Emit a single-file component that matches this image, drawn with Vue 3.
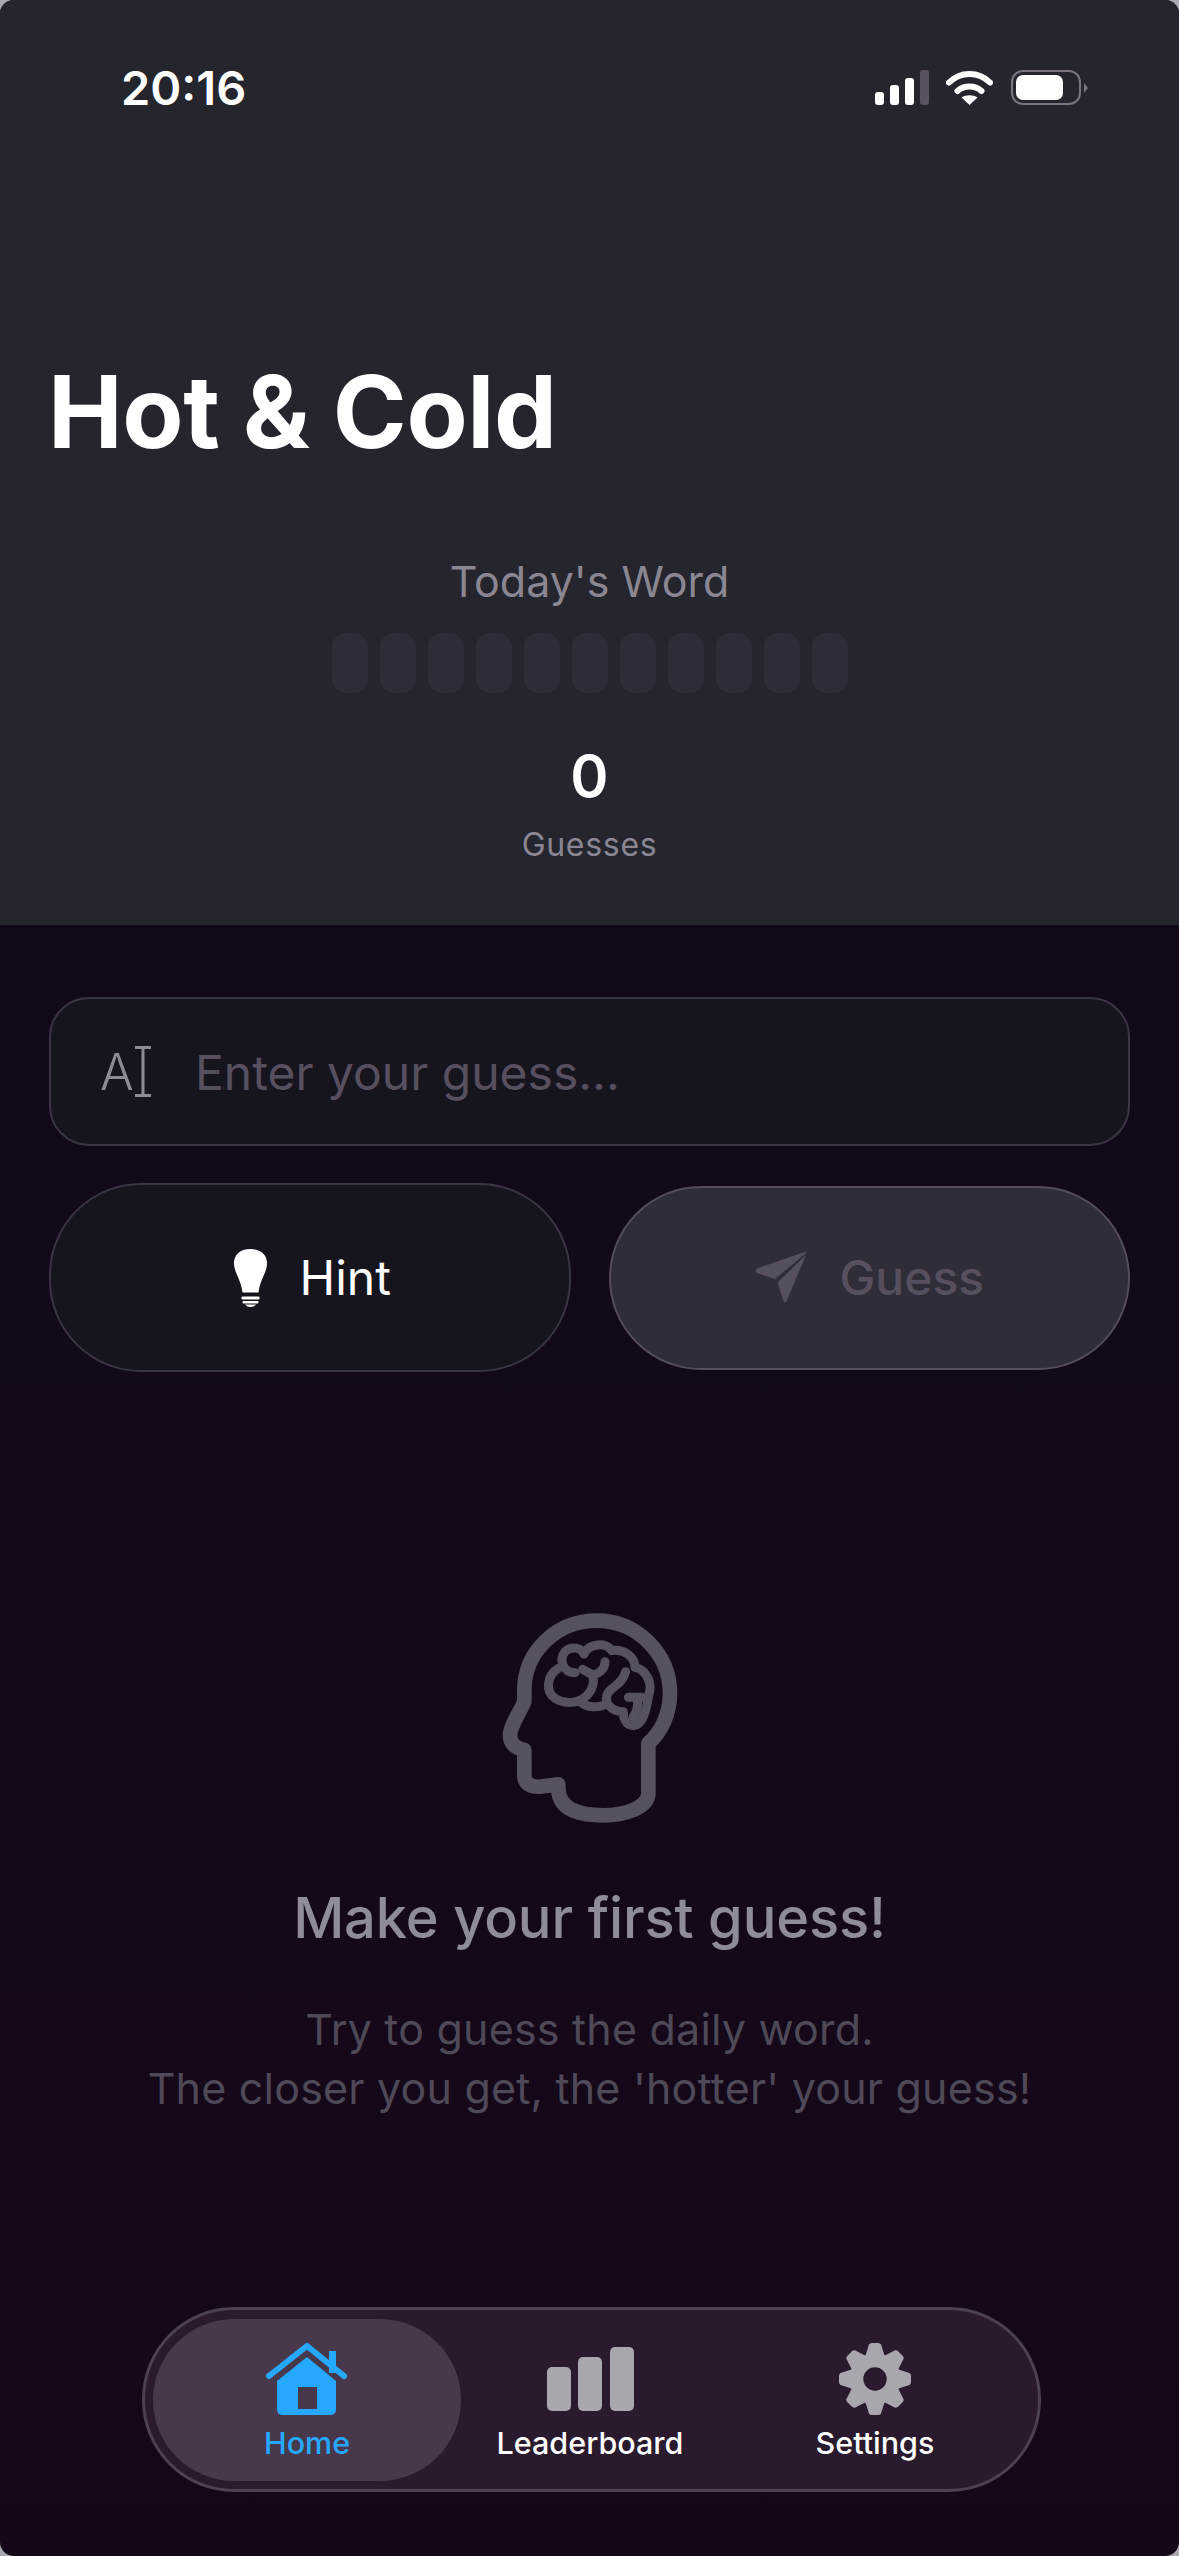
<template>
  <div class="screen">
    <header class="top">
      <div class="status">
        <span class="time">20:16</span>
        <div class="status-icons">
          <div class="signal">
            <i class="b1"></i><i class="b2"></i><i class="b3"></i><i class="b4"></i>
          </div>
          <svg class="wifi" width="47" height="35" viewBox="0 0 47 35">
            <path d="M3 12.5 C14 1 33 1 44 12.5" fill="none" stroke="#fff" stroke-width="6" stroke-linecap="round" />
            <path d="M11.5 21 C18 15 29 15 35.5 21" fill="none" stroke="#fff" stroke-width="6" stroke-linecap="round" />
            <path d="M15.5 27.5 C20 24.5 27 24.5 31.5 27.5 L23.5 35 Z" fill="#fff" />
          </svg>
          <div class="battery">
            <div class="battery-body"><div class="battery-fill"></div></div>
            <div class="battery-tip"></div>
          </div>
        </div>
      </div>

      <h1 class="title">Hot &amp; Cold</h1>

      <div class="word-box">
        <p class="word-label">Today's Word</p>
        <div class="tiles">
          <span v-for="n in 11" :key="n" class="tile"></span>
        </div>
        <p class="count">0</p>
        <p class="count-label">Guesses</p>
      </div>
    </header>

    <main class="content">
      <div class="input-row">
        <div class="ai-icon">
          <span>A</span>
          <svg width="18" height="51" viewBox="0 0 18 51">
            <path d="M1 1.5 H17 M9 1.5 V49.5 M1 49.5 H17" fill="none" stroke="#8e8a96" stroke-width="3" />
          </svg>
        </div>
        <input class="guess-input" type="text" placeholder="Enter your guess..." />
      </div>

      <div class="actions">
        <button class="btn hint">
          <svg width="33" height="58" viewBox="0 0 33 58">
            <path d="M16.5 0 C27 0 33 6 33 14 C33 24 26 30 24.5 43.5 H8.5 C7 30 0 24 0 14 C0 6 6 0 16.5 0 Z" fill="#fff" />
            <rect x="7.5" y="47.5" width="18" height="3" rx="1" fill="#fff" />
            <rect x="8.5" y="52" width="16" height="2.5" rx="1" fill="#fff" />
            <path d="M11 55.5 H22 Q20 58 16.5 58 Q13 58 11 55.5 Z" fill="#fff" />
          </svg>
          <span>Hint</span>
        </button>
        <button class="btn guess">
          <svg width="55" height="53" viewBox="0 0 55 53">
            <path d="M52 0.5 Q53.5 1 51 3 L21 28 L3 22 Q0 20 3 17.5 Z" fill="#56505e" />
            <path d="M52 4 L33 49 Q31.5 53 29.5 50 L24 33 Q23.5 31 25 30 Z" fill="#56505e" />
          </svg>
          <span>Guess</span>
        </button>
      </div>

      <div class="empty">
        <svg class="brain" width="260" height="260" viewBox="0 0 780 780" fill="none" stroke="#57505f" stroke-linecap="round" stroke-linejoin="round">
          <path stroke-width="44" d="M193 365 L193 330 C193 215 290 122 410 122 C530 122 630 220 630 340 C630 400 605 455 565 490 L565 640 C565 685 490 706 430 706 C360 706 295 690 295 625 L295 613 L240 620 C210 622 193 610 193 585 L193 510 C165 505 150 490 150 465 C150 440 175 405 193 365 Z" />
          <path stroke-width="27" d="M345 278 C310 278 295 240 315 215 C335 195 365 205 372 222 C385 190 440 185 455 212 C490 205 525 230 525 262 C560 270 580 310 565 350 C560 385 550 435 520 437 C495 437 490 410 490 395 C455 395 435 370 440 350 C445 320 485 320 497 275" />
          <path stroke-width="27" d="M295 265 C260 285 255 335 285 355 C315 375 350 365 358 362 C375 385 420 385 440 370" />
          <path stroke-width="27" d="M358 362 C395 345 405 310 398 285 C420 280 435 265 435 245 M368 268 L398 285 M505 352 L545 352 M530 352 C538 375 528 400 520 410" />
        </svg>
        <h2 class="empty-title">Make your first guess!</h2>
        <p class="empty-text">Try to guess the daily word.<br />The closer you get, the 'hotter' your guess!</p>
      </div>

      <nav class="tabbar">
        <a class="tab active">
          <svg width="82" height="72" viewBox="0 0 82 72">
            <path d="M3 33 L41 3 L78 33" fill="none" stroke="#27a8ff" stroke-width="6" stroke-linecap="round" stroke-linejoin="round" />
            <rect x="63" y="8" width="7" height="22" fill="#27a8ff" />
            <path d="M41 14 L70 38 V66 Q70 72 64 72 H17 Q11 72 11 66 V38 Z" fill="#27a8ff" />
            <rect x="32" y="44" width="19" height="22" fill="#47384c" />
          </svg>
          <span>Home</span>
        </a>
        <a class="tab board">
          <svg width="87" height="64" viewBox="0 0 87 64">
            <rect x="0" y="20" width="24" height="44" rx="5" fill="#aaa6ae" />
            <rect x="31" y="10" width="24" height="54" rx="5" fill="#aaa6ae" />
            <rect x="63" y="0" width="24" height="64" rx="5" fill="#aaa6ae" />
          </svg>
          <span>Leaderboard</span>
        </a>
        <a class="tab settings">
          <svg width="72" height="72" viewBox="0 0 72 72">
            <circle cx="36" cy="36" r="18.6" fill="none" stroke="#aaa6ae" stroke-width="13.8" />
            <path
              v-for="a in gearAngles"
              :key="a"
              d="M26 14 L30 1.5 Q31 0 33 0 H39 Q41 0 42 1.5 L46 14 Z"
              fill="#aaa6ae"
              :transform="`rotate(${a} 36 36)`"
            />
          </svg>
          <span>Settings</span>
        </a>
      </nav>
    </main>
  </div>
</template>

<script setup>
const gearAngles = [0, 45, 90, 135, 180, 225, 270, 315]
</script>

<style>
body {
  background: #a8a8ae;
}
</style>

<style scoped>
.screen {
  width: 1179px;
  height: 2556px;
  display: flex;
  flex-direction: column;
  overflow: hidden;
  border-radius: 14px;
  font-family: Inter, "Noto Sans", sans-serif;
  background: linear-gradient(180deg, #0f0b18 0%, #150719 100%);
}

.top {
  height: 925px;
  flex-shrink: 0;
  background: #24252d;
  box-sizing: border-box;
}

.status {
  display: flex;
  justify-content: space-between;
  align-items: flex-start;
  padding: 70px 91px 0 121px;
}

.time {
  font-size: 47px;
  line-height: 35px;
  font-weight: 600;
  color: #fff;
}

.status-icons {
  display: flex;
  align-items: flex-start;
  gap: 17px;
}

.signal {
  display: flex;
  align-items: flex-end;
  gap: 6px;
  height: 35px;
}

.signal i {
  display: block;
  width: 9px;
  border-radius: 3px;
  background: #fff;
}

.signal .b1 { height: 13px; }
.signal .b2 { height: 20px; }
.signal .b3 { height: 27px; }
.signal .b4 { height: 35px; background: #5a5260; }

.battery {
  display: flex;
  align-items: center;
  gap: 3px;
  height: 35px;
  margin-left: 1px;
}

.battery-body {
  width: 70px;
  height: 35px;
  box-sizing: border-box;
  border: 2px solid #7a7580;
  border-radius: 12px;
  padding: 3px;
}

.battery-fill {
  width: 47px;
  height: 25px;
  border-radius: 7px;
  background: #fff;
}

.battery-tip {
  width: 0;
  height: 0;
  border-top: 5px solid transparent;
  border-bottom: 5px solid transparent;
  border-left: 4px solid #7a7580;
}

.title {
  margin: 252px 0 0 48px;
  font-size: 100px;
  line-height: 110px;
  letter-spacing: -0.4px;
  font-weight: 700;
  color: #fff;
}

.word-box {
  display: flex;
  flex-direction: column;
  align-items: center;
  margin-top: 84px;
}

.word-box p {
  margin: 0;
}

.word-label {
  font-size: 43px;
  line-height: 60px;
  font-weight: 400;
  color: #8a8793;
}

.tiles {
  display: flex;
  gap: 12px;
  margin-top: 22px;
}

.tile {
  width: 36px;
  height: 60px;
  border-radius: 14px;
  background: #2e2c36;
}

.word-box .count {
  margin-top: 48px;
  font-size: 58px;
  line-height: 70px;
  font-weight: 600;
  color: #fff;
}

.word-box .count-label {
  margin-top: 12px;
  font-size: 32px;
  line-height: 44px;
  letter-spacing: 0.7px;
  color: #8a8793;
}

.content {
  flex: 1;
  display: flex;
  flex-direction: column;
  padding: 72px 49px 64px;
}

.input-row {
  display: flex;
  align-items: center;
  height: 149px;
  box-sizing: border-box;
  padding: 0 50px 0 49px;
  border: 2px solid #3a3543;
  border-radius: 40px;
  background: #16151e;
}

.ai-icon {
  display: flex;
  align-items: center;
  width: 95px;
  flex-shrink: 0;
  font-size: 50px;
  font-weight: 300;
  color: #8e8a96;
}

.guess-input {
  flex: 1;
  min-width: 0;
  padding: 2px 0 0;
  border: none;
  outline: none;
  background: transparent;
  font-family: inherit;
  font-size: 48px;
  color: #fff;
}

.guess-input::placeholder {
  color: #56505e;
  opacity: 1;
}

.actions {
  display: flex;
  align-items: center;
  gap: 38px;
  margin-top: 37px;
}

.btn {
  flex: 1 1 0;
  display: flex;
  align-items: center;
  justify-content: center;
  box-sizing: border-box;
  padding: 0;
  border-radius: 92px;
  font-family: inherit;
  font-size: 48px;
  font-weight: 400;
}

.hint {
  height: 189px;
  gap: 33px;
  background: #16151e;
  border: 2px solid #3a3543;
  color: #fff;
}

.hint svg {
  margin-left: 5px;
}

.guess {
  height: 184px;
  gap: 30px;
  background: #2f2d37;
  border: 2px solid #544e5c;
  color: #56505e;
  font-weight: 500;
}

.empty {
  display: flex;
  flex-direction: column;
  align-items: center;
  margin-top: 208px;
}

.empty-title {
  margin: 44px 0 0;
  font-size: 56px;
  line-height: 68px;
  letter-spacing: -0.15px;
  font-weight: 500;
  color: #8f8b99;
}

.empty-text {
  margin: 48px 0 0;
  font-size: 43px;
  line-height: 59px;
  letter-spacing: 0.2px;
  text-align: center;
  color: #4f4957;
}

.tabbar {
  margin: auto 89px 0 93px;
  height: 185px;
  box-sizing: border-box;
  display: flex;
  align-items: center;
  padding: 0 8px;
  border: 3px solid #4b4150;
  border-radius: 92px;
  background: #2a1a2e;
}

.tab {
  width: 308px;
  height: 162px;
  flex-shrink: 0;
  display: flex;
  flex-direction: column;
  align-items: center;
  justify-content: flex-start;
  box-sizing: border-box;
  padding-top: 24px;
  border-radius: 81px;
  font-size: 30.5px;
  font-weight: 500;
  color: #fff;
}

.tab.board {
  width: 258px;
}

.tab.settings {
  width: 312px;
}

.tab svg {
  height: 72px;
  margin-bottom: 9px;
}

.tab span {
  line-height: 38px;
}

.tab.active {
  background: #47384c;
  color: #27a8ff;
}
</style>
